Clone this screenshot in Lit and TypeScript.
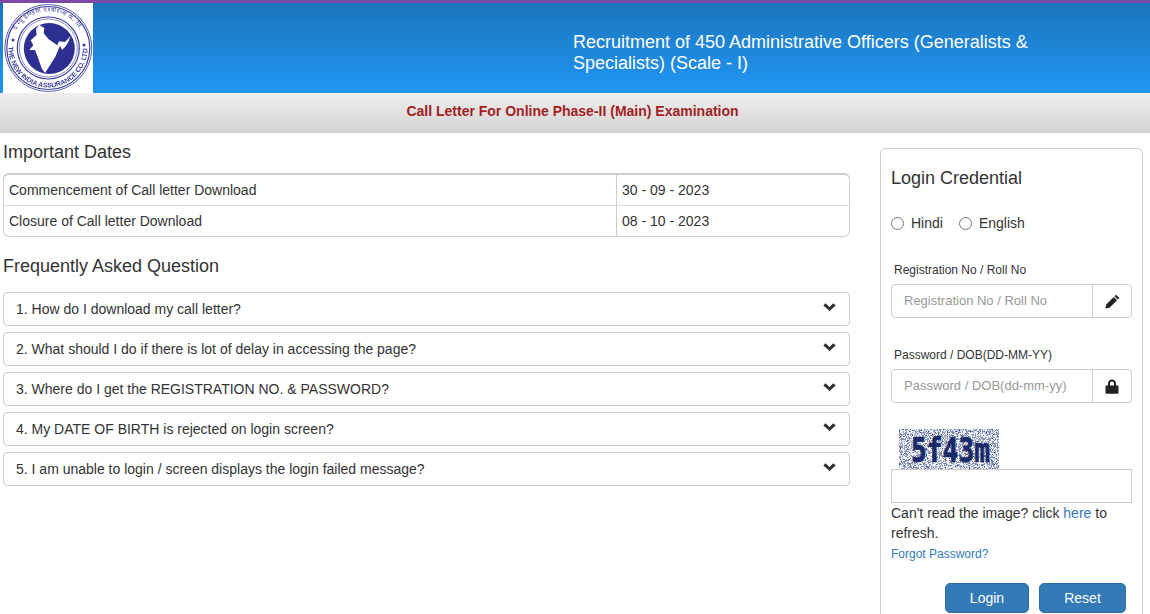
import { LitElement, html, css, svg } from "lit";
import { customElement } from "lit/decorators.js";

const CHEVRON = svg`<svg class="chev" viewBox="0 0 13 8" width="13" height="8"><path d="M0.3 2.600 L2.600 0.300 L6.500 4.100 L10.400 0.300 L12.700 2.600 L6.500 8 Z" fill="#333"/></svg>`;

function noise(seed: number, density: number): string {
  let s = seed;
  const rnd = () => {
    s = (s * 1664525 + 1013904223) % 4294967296;
    return s / 4294967296;
  };
  let d = "";
  for (let y = 0; y < 40; y++) {
    for (let x = 0; x < 100; x++) {
      if (rnd() < density) d += `M${x} ${y}h1v1h-1z`;
    }
  }
  return d;
}

const faqs = [
  "1. How do I download my call letter?",
  "2. What should I do if there is lot of delay in accessing the page?",
  "3. Where do I get the REGISTRATION NO. & PASSWORD?",
  "4. My DATE OF BIRTH is rejected on login screen?",
  "5. I am unable to login / screen displays the login failed message?",
];

@customElement("app-root")
export class AppRoot extends LitElement {
  static styles = css`
    :host {
      display: block;
      height: 614px;
      overflow: hidden;
      background: #fff;
      color: #333;
      font-family: "Liberation Sans", Arial, sans-serif;
      font-size: 14px;
      line-height: 20px;
    }
    * { box-sizing: border-box; }
    .top {
      display: flex;
      height: 93px;
      border-top: 3px solid #7b4aa8;
      background: linear-gradient(to bottom, #1b75bc, #2196f3);
      padding-left: 3px;
    }
    .logo { display: block; width: 90px; height: 90px; background: #fff; flex: none; filter: blur(0.35px); }
    .title {
      margin-left: 480px;
      width: 480px;
      padding-top: 29px;
      color: #fff;
      font-size: 18px;
      line-height: 21px;
    }
    .sub {
      height: 40px;
      display: flex;
      align-items: center;
      justify-content: center;
      padding: 0 5px 4px 0;
      background: linear-gradient(to bottom, #efefef, #d3d3d3);
      color: #a31f22;
      font-weight: bold;
      font-size: 14px;
    }
    .main { display: flex; align-items: flex-start; padding-left: 3px; }
    .left { width: 847px; flex: none; }
    h3 { margin: 0; font-size: 18px; font-weight: normal; line-height: 20px; }
    .h-dates { margin-top: 9px; }
    .h-faq { margin-top: 19px; }
    table {
      width: 100%;
      margin-top: 11px;
      border: 1px solid #ccc;
      border-top: 2px solid #ccc;
      border-radius: 6px;
      border-spacing: 0;
      height: 63px;
    }
    td { padding: 0 5px; height: 30px; }
    tr + tr td { border-top: 1px solid #ddd; height: 31px; }
    td + td { border-left: 1px solid #ccc; width: 233px; }
    .faq { margin-top: 16px; display: flex; flex-direction: column; gap: 6px; }
    .q {
      height: 34px;
      border: 1px solid #ccc;
      border-radius: 4px;
      padding: 0 12px;
      display: flex;
      align-items: center;
      justify-content: space-between;
    }
    .chev { display: block; margin: -4px 1px 0 0; }
    .panel {
      width: 263px;
      height: 520px;
      margin-left: 30px;
      margin-top: 15px;
      flex: none;
      border: 1px solid #ccc;
      border-radius: 6px;
      padding: 19px 10px 0;
    }
    .radios { display: flex; align-items: center; margin-top: 25px; height: 20px; }
    .radios input { margin: 0 7px 0 0; width: 13px; height: 13px; flex: none; }
    .radios label { margin-right: 16px; display: flex; align-items: center; }
    .lab { font-size: 12px; line-height: 16px; margin: 0 0 6px 3px; }
    .lab.l1 { margin-top: 29px; }
    .lab.l2 { margin-top: 29px; }
    .group {
      display: flex;
      height: 34px;
      border: 1px solid #ccc;
      border-radius: 4px;
    }
    .group input {
      flex: 1;
      min-width: 0;
      border: 0;
      outline: 0;
      padding: 0 12px;
      background: transparent;
      font: inherit;
      font-size: 13px;
      color: #555;
    }
    .group input::placeholder { color: #999; opacity: 1; }
    .addon {
      width: 39px;
      flex: none;
      border-left: 1px solid #ccc;
      display: flex;
      align-items: center;
      justify-content: center;
    }
    .cap { display: block; width: 100px; height: 40px; margin: 26px 0 0 8px; }
    .capinput {
      display: block;
      width: 100%;
      height: 34px;
      border: 1px solid #ccc;
      outline: 0;
      padding: 0;
      background: #fff;
    }
    a { color: #337ab7; text-decoration: none; }
    .forgot { display: block; font-size: 12px; line-height: 20px; margin-top: 1px; }
    .btns { display: flex; gap: 10px; margin-top: 19px; padding-left: 54px; }
    button {
      height: 30px;
      border: 1px solid #2e6da4;
      border-radius: 5px;
      background: #337ab7;
      color: #fff;
      font: inherit;
      padding: 0;
    }
    .b1 { width: 84px; }
    .b2 { width: 87px; }
  `;

  render() {
    const map =
      "M118 75L133 84L131 100L146 118L172 136L177 124L195 126L212 108L205 126L196 140L186 150L180 137L166 170L150 196L135 219L125 205L113 170L105 150L88 150L100 136L92 121L110 105L108 86Z";
    return html`
      <div class="top">
        <svg class="logo" viewBox="0 0 90 90">
          <defs>
            <path id="arcB" d="M5.500 45 A39.500 39.500 0 0 0 84.500 45" fill="none"></path>
            <path id="arcT" d="M8.500 45 A36.500 36.500 0 0 1 81.500 45" fill="none"></path>
          </defs>
          <circle cx="45.300" cy="45" r="43.500" fill="none" stroke="#5b5fae" stroke-width="1"></circle>
          <circle cx="45.300" cy="45" r="41.500" fill="none" stroke="#3a3f9c" stroke-width="1.200"></circle>
          <circle cx="45.300" cy="45" r="31" fill="none" stroke="#3a3f9c" stroke-width="1.200"></circle>
          <circle cx="45.300" cy="45" r="29" fill="none" stroke="#6b6fb8" stroke-width="0.800"></circle>
          <circle cx="46.300" cy="45.500" r="25.500" fill="#2d3091"></circle>
          <text font-family="Liberation Sans" font-size="6.800" font-weight="bold" fill="#3a3f9c">
            <textPath href="#arcB" startOffset="50%" text-anchor="middle">THE NEW INDIA ASSURANCE CO. LTD.</textPath>
          </text>
          <text font-family="Noto Sans, Liberation Sans" font-size="6.200" fill="#3a3f9c" letter-spacing="0.500">
            <textPath href="#arcT" startOffset="50%" text-anchor="middle">द न्यू इण्डिया एश्योरन्स कं. लि.</textPath>
          </text>
          <circle cx="10" cy="37" r="1.500" fill="#3a3f9c"></circle>
          <circle cx="81" cy="42" r="1.500" fill="#3a3f9c"></circle>
          <g transform="translate(-3 -3) scale(0.3333)"><path d="${map}" fill="#fff"></path></g>
        </svg>
        <div class="title">Recruitment of 450 Administrative Officers (Generalists &amp; Specialists) (Scale - I)</div>
      </div>
      <div class="sub">Call Letter For Online Phase-II (Main) Examination</div>
      <div class="main">
        <div class="left">
          <h3 class="h-dates">Important Dates</h3>
          <table>
            <tr><td>Commencement of Call letter Download</td><td>30 - 09 - 2023</td></tr>
            <tr><td>Closure of Call letter Download</td><td>08 - 10 - 2023</td></tr>
          </table>
          <h3 class="h-faq">Frequently Asked Question</h3>
          <div class="faq">
            ${faqs.map((q) => html`<div class="q"><span>${q}</span>${CHEVRON}</div>`)}
          </div>
        </div>
        <div class="panel">
          <h3>Login Credential</h3>
          <div class="radios">
            <label><input type="radio" name="lang" />Hindi</label>
            <label><input type="radio" name="lang" />English</label>
          </div>
          <div class="lab l1">Registration No / Roll No</div>
          <div class="group">
            <input placeholder="Registration No / Roll No" />
            <span class="addon">
              <svg viewBox="0 0 14 14" width="15" height="15"><path d="M10.300 0.600 L13.400 3.700 L12 5.100 L8.900 2 Z M8.200 2.700 L11.300 5.800 L4.200 12.900 L0.400 13.600 L1.100 9.800 Z" fill="#222"></path></svg>
            </span>
          </div>
          <div class="lab l2">Password / DOB(DD-MM-YY)</div>
          <div class="group">
            <input placeholder="Password / DOB(dd-mm-yy)" />
            <span class="addon">
              <svg viewBox="0 0 14 15" width="14" height="15"><path fill-rule="evenodd" d="M3 6.500V4.500C3 2 4.800 .4 7 .4S11 2 11 4.500V6.500H12.600C13.200 6.500 13.500 6.800 13.500 7.400V13.800C13.500 14.400 13.200 14.700 12.600 14.700H1.400C.8 14.700 .5 14.400 .5 13.800V7.400C.5 6.800 .8 6.500 1.400 6.500ZM5 6.500H9V4.500C9 3.200 8.200 2.400 7 2.400S5 3.200 5 4.500Z" fill="#222"></path></svg>
            </span>
          </div>
          <svg class="cap" viewBox="0 0 100 40" shape-rendering="crispEdges">
            <rect width="100" height="40" fill="#eef0f6"></rect>
            <path d="${noise(7, 0.42)}" fill="#8f9abb"></path>
            <path d="${noise(91, 0.08)}" fill="#4a5c92"></path>
            <text x="12" y="33" textLength="79" lengthAdjust="spacingAndGlyphs" font-family="DejaVu Sans Mono" font-weight="bold" font-size="33" fill="#1a2a68" stroke="#1a2a68" stroke-width="0.700" shape-rendering="auto">5f43m</text>
          </svg>
          <input class="capinput" />
          <div>Can't read the image? click <a href="#">here</a> to refresh.</div>
          <a class="forgot" href="#">Forgot Password?</a>
          <div class="btns">
            <button class="b1">Login</button>
            <button class="b2">Reset</button>
          </div>
        </div>
      </div>
    `;
  }
}
